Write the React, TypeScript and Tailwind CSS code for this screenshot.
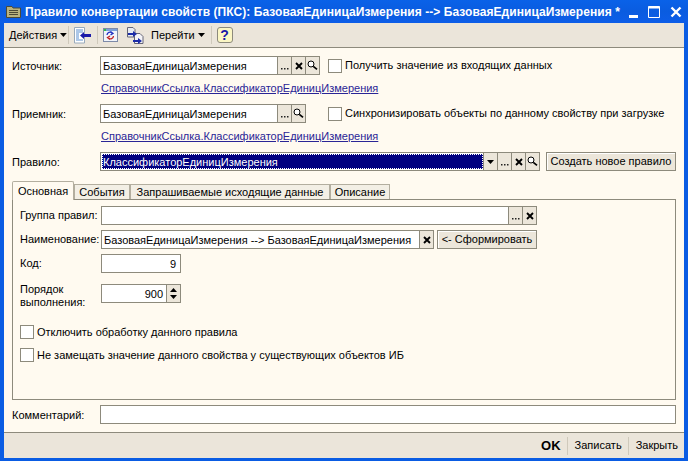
import React from "react";

const Dots = () => (
  <svg width="8" height="9" viewBox="0 0 8 9"><rect x="0" y="7" width="1.5" height="1.5" fill="#222" /><rect x="3" y="7" width="1.5" height="1.5" fill="#222" /><rect x="6" y="7" width="1.5" height="1.5" fill="#222" /></svg>
);
const X = () => (
  <svg width="8" height="8" viewBox="0 0 8 8"><path d="M1 1 L7 7 M7 1 L1 7" stroke="#000" strokeWidth="1.9" fill="none" /></svg>
);
const Mag = () => (
  <svg width="11" height="11" viewBox="0 0 11 11"><circle cx="4" cy="4" r="3" stroke="#000" strokeWidth="1" fill="#fff" /><path d="M6.3 6.3 L10 9.3" stroke="#000" strokeWidth="1.7" /></svg>
);
const Down = () => (
  <svg width="7" height="4" viewBox="0 0 7 4"><path d="M0 0 H7 L3.5 4 Z" fill="#000" /></svg>
);

const Cell = ({ children }: { children: React.ReactNode }) => (
  <div className="w-[14px] shrink-0 h-full border-l border-[#8d8a7c] bg-[#ece6da] flex items-center justify-center">{children}</div>
);

const Field = ({ w, text, cells, hl }: { w: string; text?: string; cells?: React.ReactNode; hl?: boolean }) => (
  <div className={`${w} h-[19px] shrink-0 border border-[#8d8a7c] bg-white flex`}>
    <div className={`flex-1 min-w-0 overflow-hidden whitespace-nowrap leading-[18px] ${hl ? "pl-px py-px" : "pl-[2px]"}`}>
      {hl ? (
        <div className="h-full bg-[#000080] text-white outline-1 outline-dotted outline-white -outline-offset-1 pl-[1px] leading-[16px]">{text}</div>
      ) : (
        text
      )}
    </div>
    {cells}
  </div>
);

const Check = ({ label, className = "" }: { label: string; className?: string }) => (
  <div className={`flex items-center gap-[3px] h-[14px] ${className}`}>
    <div className="w-[14px] h-[14px] border border-[#8d8a7c] bg-white shrink-0" />
    <span className="whitespace-nowrap">{label}</span>
  </div>
);

const Link = ({ text }: { text: string }) => (
  <div className="ml-[89px] underline text-[#2a2596] leading-[14px]">{text}</div>
);

const Btn = ({ w, text }: { w: string; text: string }) => (
  <div className={`${w} h-[19px] shrink-0 border border-[#8d8a7c] bg-[#ece6da] flex items-center justify-center whitespace-nowrap shadow-[inset_1px_1px_0_#fff]`}>{text}</div>
);

const Sep = () => <div className="w-px h-[18px] bg-[#cfc9bb]" />;

const Tab = ({ text, w, active }: { text: string; w: string; active?: boolean }) => (
  <div
    className={`${w} shrink-0 border border-[#b3ae9f] text-center whitespace-nowrap ${
      active
        ? "h-[19px] bg-[#fffaf0] border-b-0 rounded-t-[2px] border-[#8d8a7c] leading-[18px] relative z-10"
        : "h-[15px] self-end bg-[#f3efe5] border-b-0 leading-[14px]"
    }`}
  >
    {text}
  </div>
);

const Row = ({ label, children, className = "" }: { label: string; children: React.ReactNode; className?: string }) => (
  <div className={`flex items-center ${className}`}>
    <div className="w-[88px] shrink-0 whitespace-nowrap pt-px">{label}</div>
    {children}
  </div>
);

const A = "БазоваяЕдиницаИзмерения";
const L = "СправочникСсылка.КлассификаторЕдиницИзмерения";

export default function App() {
  return (
    <div
      className="w-[688px] h-[461px] overflow-hidden flex flex-col bg-[#0a5ce3] text-[11px] text-black"
      style={{ fontFamily: '"Liberation Sans", Arial, sans-serif' }}
    >
      {/* title */}
      <div className="h-[23px] shrink-0 flex items-center pl-[6px] pr-[6px] bg-gradient-to-b from-[#0a62e8] via-[#0a5ce0] to-[#0d5de8] text-white font-bold text-[12px]">
        <svg width="15" height="13" viewBox="0 0 15 13" className="shrink-0">
          <path d="M0.5 1.5 H6 L7 3 H14.5 V12.5 H0.5 Z" fill="#b9b27e" stroke="#4d4a36" />
          <path d="M3 5.5 H12 M3 7.5 H12 M3 9.5 H12" stroke="#4d4a36" />
        </svg>
        <span className="ml-[4px] whitespace-nowrap tracking-[0.06px]">
          Правило конвертации свойств (ПКС): {A} --&gt; {A} *
        </span>
        <div className="ml-auto flex items-center gap-[9px]">
          <svg width="10" height="12" viewBox="0 0 10 12"><rect x="0" y="9" width="9" height="3" fill="#fff" /></svg>
          <svg width="12" height="12" viewBox="0 0 12 12"><path d="M0.5 0.5 H11.5 V11.5 H0.5 Z" fill="none" stroke="#fff" /><rect x="0.5" y="0.5" width="11" height="2" fill="#fff" /></svg>
          <svg width="12" height="12" viewBox="0 0 12 12" className="ml-[1px]"><path d="M1.5 1.5 L10.5 10.5 M10.5 1.5 L1.5 10.5" stroke="#fff" strokeWidth="2.4" /></svg>
        </div>
      </div>

      <div className="flex-1 min-h-0 mx-[4px] mb-[3px] bg-[#fffaf0] flex flex-col">
        {/* toolbar */}
        <div className="h-[25px] shrink-0 bg-[#ebe5da] border-b border-[#8d8a7c] flex items-center pl-[5px]">
          <span className="flex items-center gap-[3px] whitespace-nowrap w-[58px]">Действия <Down /></span>
          <div className="ml-[1px]"><Sep /></div>
          <svg width="18" height="17" viewBox="0 0 18 17" className="ml-[5px]">
            <path d="M0.5 0.5 H10.5 V16 H0.5 Z" fill="#fff" stroke="#9ab" />
            <path d="M2 3 H9 M2 5 H9 M2 7 H5 M2 9 H5 M2 11 H5 M2 13 H9" stroke="#5a8fd0" />
            <path d="M6 8.5 L10 5 V7 H17 V10 H10 V12 Z" fill="#1a1aa8" />
          </svg>
          <div className="ml-[5px]"><Sep /></div>
          <svg width="15" height="14" viewBox="0 0 15 14" className="ml-[5px]">
            <rect x="0.5" y="0.5" width="14" height="13" fill="#f1f4fa" stroke="#7d8aa8" />
            <rect x="1" y="1" width="13" height="2" fill="#7ba0d8" />
            <rect x="1" y="1" width="2" height="2" fill="#2ec24a" />
            <path d="M4 7 A3 3 0 0 1 9 5 M7.5 3.5 L10 5.5 L7.5 7" stroke="#2030c0" fill="none" strokeWidth="1.3" />
            <path d="M10.5 8 A3 3 0 0 1 5.5 10 M7 11.5 L4.5 9.5 L7 8" stroke="#c02020" fill="none" strokeWidth="1.3" />
          </svg>
          <svg width="17" height="17" viewBox="0 0 17 17" className="ml-[9px]">
            <path d="M0.5 0.5 H6 L8 2.5 V10 H0.5 Z" fill="#e8ecf2" stroke="#667" />
            <path d="M7.5 6.5 H13 L16 9.5 V16.5 H7.5 Z" fill="#f4f4f8" stroke="#667" />
            <path d="M1 6 H6 V4 L10 7 L6 10 V8 H1 Z" fill="#1c2ca8" />
            <path d="M6 13 H11 V11 L15 14 L11 17 V15 H6 Z" fill="#1c2ca8" />
          </svg>
          <span className="ml-[7px] flex items-center gap-[3px] whitespace-nowrap">Перейти <Down /></span>
          <div className="ml-[6px]"><Sep /></div>
          <div className="ml-[5px] w-[16px] h-[16px] rounded-[3px] border border-[#8d8a7c] bg-[#fbf6c4] flex items-center justify-center font-bold text-[#1a1aa8] text-[14px] leading-none">?</div>
        </div>

        {/* form */}
        <div className="px-[8px] pt-[8px]">
          <Row label="Источник:">
            <Field w="w-[220px]" text={A} cells={<><Cell><Dots /></Cell><Cell><X /></Cell><Cell><Mag /></Cell></>} />
            <Check className="ml-[8px]" label="Получить значение из входящих данных" />
          </Row>
          <div className="mt-[6px]"><Link text={L} /></div>
          <Row label="Приемник:" className="mt-[9px]">
            <Field w="w-[206px]" text={A} cells={<><Cell><Dots /></Cell><Cell><Mag /></Cell></>} />
            <Check className="ml-[22px]" label="Синхронизировать объекты по данному свойству при загрузке" />
          </Row>
          <div className="mt-[6px]"><Link text={L} /></div>
          <Row label="Правило:" className="mt-[9px]">
            <Field w="w-[440px]" hl text="КлассификаторЕдиницИзмерения" cells={<><Cell><Down /></Cell><Cell><Dots /></Cell><Cell><X /></Cell><Cell><Mag /></Cell></>} />
            <div className="ml-[6px]"><Btn w="w-[130px]" text="Создать новое правило" /></div>
          </Row>

          {/* tabs */}
          <div className="flex mt-[10px] h-[18px] relative z-10">
            <Tab active w="w-[62px]" text="Основная" />
            <Tab w="w-[56px]" text="События" />
            <Tab w="w-[200px]" text="Запрашиваемые исходящие данные" />
            <Tab w="w-[60px]" text="Описание" />
          </div>
          <div className="h-[201px] w-[664px] border border-[#8d8a7c] pl-[7px] pt-[6px]">
            <div className="flex items-center">
              <div className="w-[81px] shrink-0 whitespace-nowrap">Группа правил:</div>
              <Field w="w-[436px]" cells={<><Cell><Dots /></Cell><Cell><X /></Cell></>} />
            </div>
            <div className="flex items-center mt-[5px]">
              <div className="w-[81px] shrink-0 whitespace-nowrap">Наименование:</div>
              <Field w="w-[333px]" text={`${A} --> ${A}`} cells={<Cell><X /></Cell>} />
              <div className="ml-[3px]"><Btn w="w-[100px]" text="<- Сформировать" /></div>
            </div>
            <div className="flex items-center mt-[5px]">
              <div className="w-[81px] shrink-0">Код:</div>
              <div className="w-[80px] h-[19px] border border-[#8d8a7c] bg-white text-right pr-[4px] leading-[18px]">9</div>
            </div>
            <div className="flex items-start mt-[11px] h-[30px]">
              <div className="w-[81px] shrink-0 leading-[13px] -mt-px">Порядок<br />выполнения:</div>
              <div className="w-[80px] h-[19px] border border-[#8d8a7c] bg-white flex">
                <div className="flex-1 text-right pr-[3px] leading-[18px]">900</div>
                <div className="w-[14px] bg-[#ece6da] border-l border-[#8d8a7c] flex flex-col items-center justify-between py-[3px]">
                  <svg width="7" height="4" viewBox="0 0 7 4"><path d="M0 4 H7 L3.5 0 Z" /></svg>
                  <svg width="7" height="4" viewBox="0 0 7 4"><path d="M0 0 H7 L3.5 4 Z" /></svg>
                </div>
              </div>
            </div>
            <Check className="mt-[11px]" label="Отключить обработку данного правила" />
            <Check className="mt-[9px]" label="Не замещать значение данного свойства у существующих объектов ИБ" />
          </div>

          <Row label="Комментарий:" className="mt-[5px]">
            <div className="w-[576px] h-[19px] border border-[#8d8a7c] bg-white" />
          </Row>
        </div>

        {/* bottom */}
        <div className="mt-auto h-[26px] shrink-0 bg-[#ebe5da] border-t border-[#8d8a7c] flex items-center justify-end pr-[6px]">
          <span className="font-bold text-[13px]">OK</span>
          <div className="ml-[6px]"><Sep /></div>
          <span className="ml-[7px]">Записать</span>
          <div className="ml-[6px]"><Sep /></div>
          <span className="ml-[7px]">Закрыть</span>
        </div>
      </div>
    </div>
  );
}
